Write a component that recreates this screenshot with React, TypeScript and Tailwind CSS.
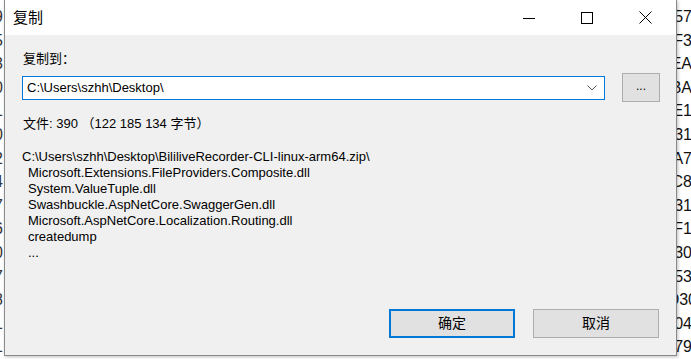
import React from "react";

const bgRows = ["057", "3F3", "1EA", "3BA", "7E1", "831", "4A7", "0C8", "531", "0F1", "B30", "E53", "D30", "904", "279"];
const leftRows = ["9", "5", "3", "0", "1", "0", "2", "4", "7", "6", "0", "7", "8", "1", "1"];

const paths = [
  "Microsoft.Extensions.FileProviders.Composite.dll",
  "System.ValueTuple.dll",
  "Swashbuckle.AspNetCore.SwaggerGen.dll",
  "Microsoft.AspNetCore.Localization.Routing.dll",
  "createdump",
  "...",
];

export default function App() {
  const font = { fontFamily: '"Liberation Sans", Arial, "Noto Sans CJK SC", sans-serif' };
  return (
    <div className="relative w-[691px] h-[359px] overflow-hidden bg-white text-black" style={font}>
      {/* background window text */}
      <div className="absolute left-[630px] w-[61px] top-[5px] flex flex-col text-right text-[16px] leading-[23.6px] text-[#111]">
        {bgRows.map((r, i) => (
          <div key={i} className={i === 12 ? "whitespace-nowrap -mr-[6px]" : "whitespace-nowrap -mr-[1px]"}>
            {r}
          </div>
        ))}
      </div>
      <div className="absolute left-[-6px] top-[5px] flex flex-col text-[16px] leading-[23.6px] text-[#333]">
        {leftRows.map((r, i) => (
          <div key={i}>{r}</div>
        ))}
      </div>

      {/* dialog */}
      <div className="absolute left-[4px] top-0 w-[673px] h-[356px] flex flex-col border-l border-r border-b border-[#8a8a8a] shadow-[1px_1px_3px_rgba(0,0,0,0.25)]">
        <div className="h-[35px] bg-white flex items-center shrink-0">
          <div className="pl-[8px] text-[15px] leading-none">复制</div>
          <div className="ml-auto flex h-full">
            <div className="w-[58px] flex items-center justify-center">
              <div className="w-[12px] h-px bg-black mt-[1px]" />
            </div>
            <div className="w-[58px] flex items-center justify-center">
              <div className="w-[12px] h-[12px] border border-black" />
            </div>
            <div className="w-[58px] flex items-center justify-center">
              <svg width="13" height="13" viewBox="0 0 13 13">
                <path d="M0.5 0.5 L12.5 12.5 M12.5 0.5 L0.5 12.5" stroke="#000" strokeWidth="1" fill="none" />
              </svg>
            </div>
            <div className="w-[2px]" />
          </div>
        </div>

        <div className="flex-1 bg-[#f0f0f0] flex flex-col pt-[16px] pl-[17px] pr-[16px] pb-[17px] text-[13px]">
          <div className="leading-[16px] pl-[1px]">复制到：</div>
          <div className="mt-[6px] flex items-center h-[29px]">
            <div className="w-[584px] h-[24px] bg-white border border-[#0078d7] flex items-center px-[4px]">
              <span className="text-[13px]">C:\Users\szhh\Desktop\</span>
              <svg className="ml-auto mr-[3px]" width="10" height="6" viewBox="0 0 10 6">
                <path d="M0.5 0.5 L5 5 L9.5 0.5" stroke="#555" strokeWidth="1" fill="none" />
              </svg>
            </div>
            <div className="ml-[17px] w-[38px] h-[29px] bg-[#e1e1e1] border border-[#adadad] flex items-center justify-center text-[12px] leading-none pb-[3px]">
              ...
            </div>
          </div>
          <div className="mt-[14px] leading-[16px] pl-[1px]">文件: 390 （122 185 134 字节）</div>
          <div className="mt-[17px] flex flex-col leading-[16px]">
            <div>C:\Users\szhh\Desktop\BililiveRecorder-CLI-linux-arm64.zip\</div>
            {paths.map((p) => (
              <div key={p} className="pl-[6px]">{p}</div>
            ))}
          </div>
          <div className="mt-auto flex justify-end gap-[18px] pr-[1px]">
            <div className="w-[126px] h-[29px] bg-[#e1e1e1] border-2 border-[#0078d7] flex items-center justify-center text-[14px]">
              确定
            </div>
            <div className="w-[126px] h-[29px] bg-[#e1e1e1] border border-[#adadad] flex items-center justify-center text-[14px]">
              取消
            </div>
          </div>
        </div>
      </div>
    </div>
  );
}
